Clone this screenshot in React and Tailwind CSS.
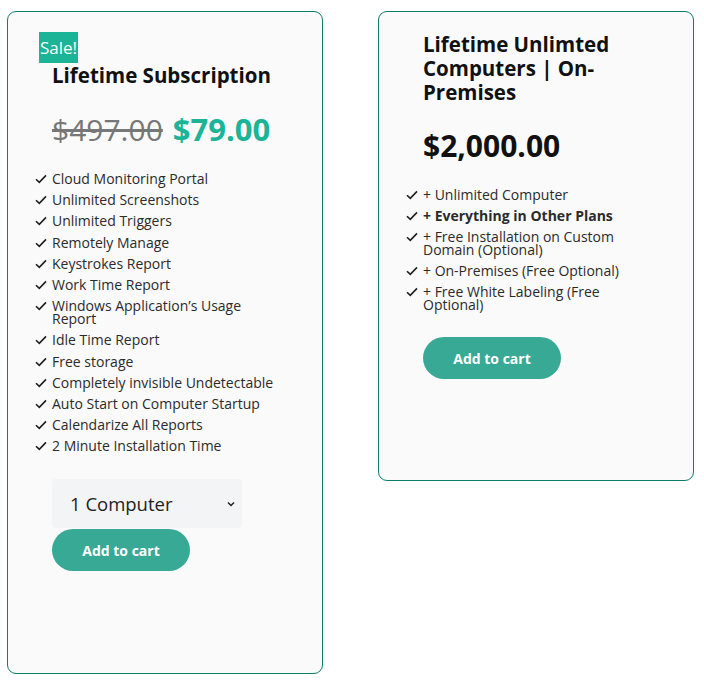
import React from 'react';

const font = { fontFamily: '"Open Sans", "Liberation Sans", sans-serif' };

function Check() {
  return (
    <svg width="12" height="10" viewBox="0 0 12 10" className="shrink-0 mt-[2px]">
      <path d="M1 5.2 L4.3 8.4 L11 1.4" fill="none" stroke="#1f1f1f" strokeWidth="1.6" />
    </svg>
  );
}

function Feature({ children, bold }) {
  return (
    <li className="flex items-start gap-[5px]">
      <Check />
      <span className={`text-[14px] leading-[13px] text-[#2b2b2b] ${bold ? 'font-bold' : ''}`}>{children}</span>
    </li>
  );
}

function CartButton({ className = '' }) {
  return (
    <button className={`h-[42px] w-[138px] rounded-full bg-[#38a995] text-white text-[14px] font-bold ${className}`}>
      Add to cart
    </button>
  );
}

const features = [
  'Cloud Monitoring Portal',
  'Unlimited Screenshots',
  'Unlimited Triggers',
  'Remotely Manage',
  'Keystrokes Report',
  'Work Time Report',
  'Windows Application’s Usage Report',
  'Idle Time Report',
  'Free storage',
  'Completely invisible Undetectable',
  'Auto Start on Computer Startup',
  'Calendarize All Reports',
  '2 Minute Installation Time',
];

export default function App() {
  return (
    <div className="flex items-start bg-white w-[704px] h-[682px] pt-[11px] pl-[7px] gap-[55px]" style={font}>
      <div className="w-[316px] h-[663px] rounded-[9px] border border-[#0b7f68] bg-[#fafafa] pt-[20px]">
        <div className="ml-[31px] inline-block bg-[#1bb496] text-white text-[17px] leading-[31px] px-[1px]">Sale!</div>
        <h2 className="ml-[44px] text-[20.5px] font-bold text-[#111] leading-[24px]">Lifetime Subscription</h2>
        <div className="ml-[44px] mt-[24px] flex items-baseline gap-[10px] text-[30px] leading-[36px]">
          <span className="line-through text-[#777]">$497.00</span>
          <span className="font-bold text-[#1bb496] text-[31px]">$79.00</span>
        </div>
        <ul className="ml-[27px] mt-[24px] w-[240px] flex flex-col gap-[8.2px]">
          {features.map((f) => (
            <Feature key={f}>{f}</Feature>
          ))}
        </ul>
        <div className="ml-[44px] mt-[27px] w-[190px] h-[49px] rounded-[4px] bg-[#f3f4f6] flex items-center justify-between pl-[18px] pr-[6px]">
          <span className="text-[18.5px] text-[#222]">1 Computer</span>
          <svg width="10" height="8" viewBox="0 0 10 8">
            <path d="M2 2.5 L5 5.5 L8 2.5" fill="none" stroke="#222" strokeWidth="1.5" />
          </svg>
        </div>
        <CartButton className="ml-[44px] mt-[1px]" />
      </div>

      <div className="w-[316px] h-[470px] rounded-[9px] border border-[#0b7f68] bg-[#fafafa] pt-[20px]">
        <h2 className="ml-[44px] w-[220px] text-[20.5px] font-bold text-[#111] leading-[24px]">
          Lifetime Unlimted Computers | On-Premises
        </h2>
        <div className="ml-[44px] mt-[24px] text-[30px] leading-[36px] font-bold text-[#111]">$2,000.00</div>
        <ul className="ml-[27px] mt-[24px] w-[225px] flex flex-col gap-[8px]">
          <Feature>+ Unlimited Computer</Feature>
          <Feature bold>+ Everything in Other Plans</Feature>
          <Feature>+ Free Installation on Custom Domain (Optional)</Feature>
          <Feature>+ On-Premises (Free Optional)</Feature>
          <Feature>+ Free White Labeling (Free Optional)</Feature>
        </ul>
        <CartButton className="ml-[44px] mt-[26px]" />
      </div>
    </div>
  );
}
